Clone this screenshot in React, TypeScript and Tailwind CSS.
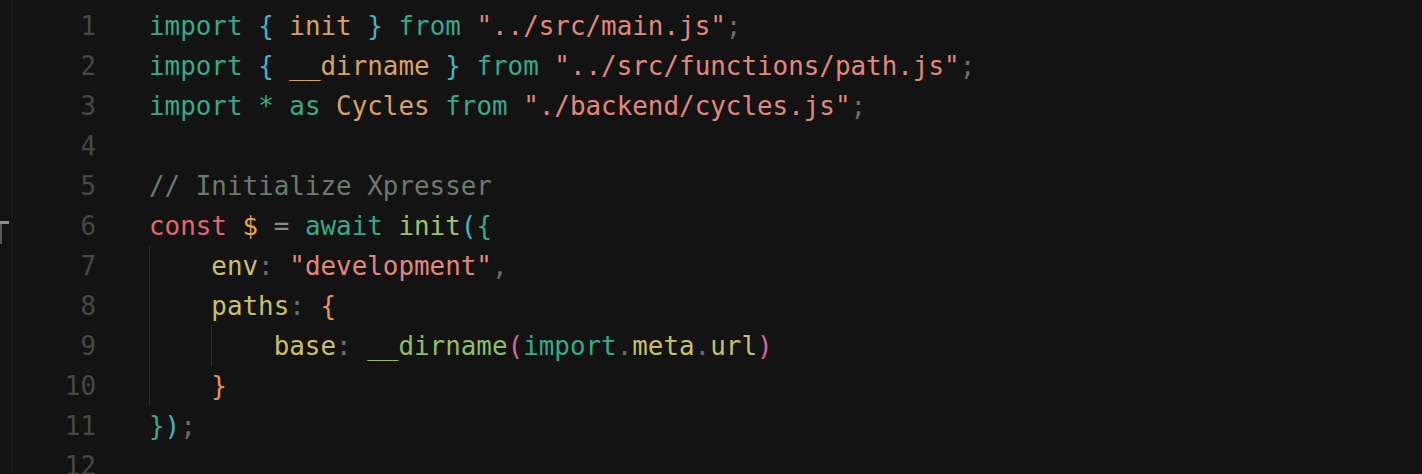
type Tok = [string, string];

const C = {
  kw: 'text-[#3aa88a]',
  brace: 'text-[#45b5c8]',
  name: 'text-[#d8a266]',
  str: 'text-[#e2887c]',
  punct: 'text-[#6c6c6c]',
  comment: 'text-[#6b7b6e]',
  decl: 'text-[#e0686f]',
  dollar: 'text-[#e6a24c]',
  op: 'text-[#8a8a8a]',
  fn: 'text-[#a1c267]',
  prop: 'text-[#c9c06b]',
  orange: 'text-[#e8925c]',
  call: 'text-[#8fbe6a]',
  pink: 'text-[#d9659e]',
  plain: 'text-[#c8c8c8]',
};

const lines: { indent: number; guides: number[]; toks: Tok[] }[] = [
  {
    indent: 0,
    guides: [],
    toks: [
      ['import', C.kw], [' ', C.plain], ['{', C.brace], [' ', C.plain], ['init', C.name],
      [' ', C.plain], ['}', C.brace], [' ', C.plain], ['from', C.kw], [' ', C.plain],
      ['"../src/main.js"', C.str], [';', C.punct],
    ],
  },
  {
    indent: 0,
    guides: [],
    toks: [
      ['import', C.kw], [' ', C.plain], ['{', C.brace], [' ', C.plain], ['__dirname', C.name],
      [' ', C.plain], ['}', C.brace], [' ', C.plain], ['from', C.kw], [' ', C.plain],
      ['"../src/functions/path.js"', C.str], [';', C.punct],
    ],
  },
  {
    indent: 0,
    guides: [],
    toks: [
      ['import', C.kw], [' ', C.plain], ['*', C.kw], [' ', C.plain], ['as', C.kw], [' ', C.plain],
      ['Cycles', C.name], [' ', C.plain], ['from', C.kw], [' ', C.plain],
      ['"./backend/cycles.js"', C.str], [';', C.punct],
    ],
  },
  { indent: 0, guides: [], toks: [] },
  { indent: 0, guides: [], toks: [['// Initialize Xpresser', C.comment]] },
  {
    indent: 0,
    guides: [],
    toks: [
      ['const', C.decl], [' ', C.plain], ['$', C.dollar], [' ', C.plain], ['=', C.op], [' ', C.plain],
      ['await', C.kw], [' ', C.plain], ['init', C.fn], ['(', C.brace], ['{', C.kw],
    ],
  },
  {
    indent: 1,
    guides: [0],
    toks: [['env', C.prop], [':', C.punct], [' ', C.plain], ['"development"', C.str], [',', C.punct]],
  },
  {
    indent: 1,
    guides: [0],
    toks: [['paths', C.prop], [':', C.punct], [' ', C.plain], ['{', C.orange]],
  },
  {
    indent: 2,
    guides: [0, 1],
    toks: [
      ['base', C.prop], [':', C.punct], [' ', C.plain], ['__dirname', C.call], ['(', C.pink],
      ['import', C.kw], ['.', C.punct], ['meta', C.prop], ['.', C.punct], ['url', C.prop], [')', C.pink],
    ],
  },
  { indent: 1, guides: [0], toks: [['}', C.orange]] },
  { indent: 0, guides: [], toks: [['}', C.kw], [')', C.brace], [';', C.punct]] },
  { indent: 0, guides: [], toks: [] },
];

const CodeLine = ({ indent, guides, toks }: { indent: number; guides: number[]; toks: Tok[] }) => (
  <div className="flex h-[40px] items-center whitespace-pre">
    {Array.from({ length: indent }).map((_, i) => (
      <span
        key={i}
        className={`inline-block h-[40px] w-[4ch] ${guides.includes(i) ? 'border-l border-[#2e2e2e]' : ''}`}
      />
    ))}
    {toks.map(([t, c], i) => (
      <span key={i} className={c}>
        {t}
      </span>
    ))}
  </div>
);

export default function App() {
  return (
    <div className="relative flex h-[474px] w-full overflow-hidden bg-[#131313] font-['DejaVu_Sans_Mono',monospace] text-[25.9px] leading-[40px]">
      <div className="absolute left-0 top-[221px] h-[3px] w-[9px] bg-[#8c8c8c]" />
      <div className="absolute left-0 top-[224px] h-[20px] w-[2px] bg-[#5a5660]" />
      <div className="h-full w-[12px] shrink-0 border-r border-[#1d1d1d]" />
      <div className="w-[84px] shrink-0 pt-[6px] text-right text-[#474747]">
        {lines.map((_, i) => (
          <div key={i} className="h-[40px]">
            {i + 1}
          </div>
        ))}
      </div>
      <div className="ml-[53px] pt-[6px]">
        {lines.map((l, i) => (
          <CodeLine key={i} {...l} />
        ))}
      </div>
    </div>
  );
}
